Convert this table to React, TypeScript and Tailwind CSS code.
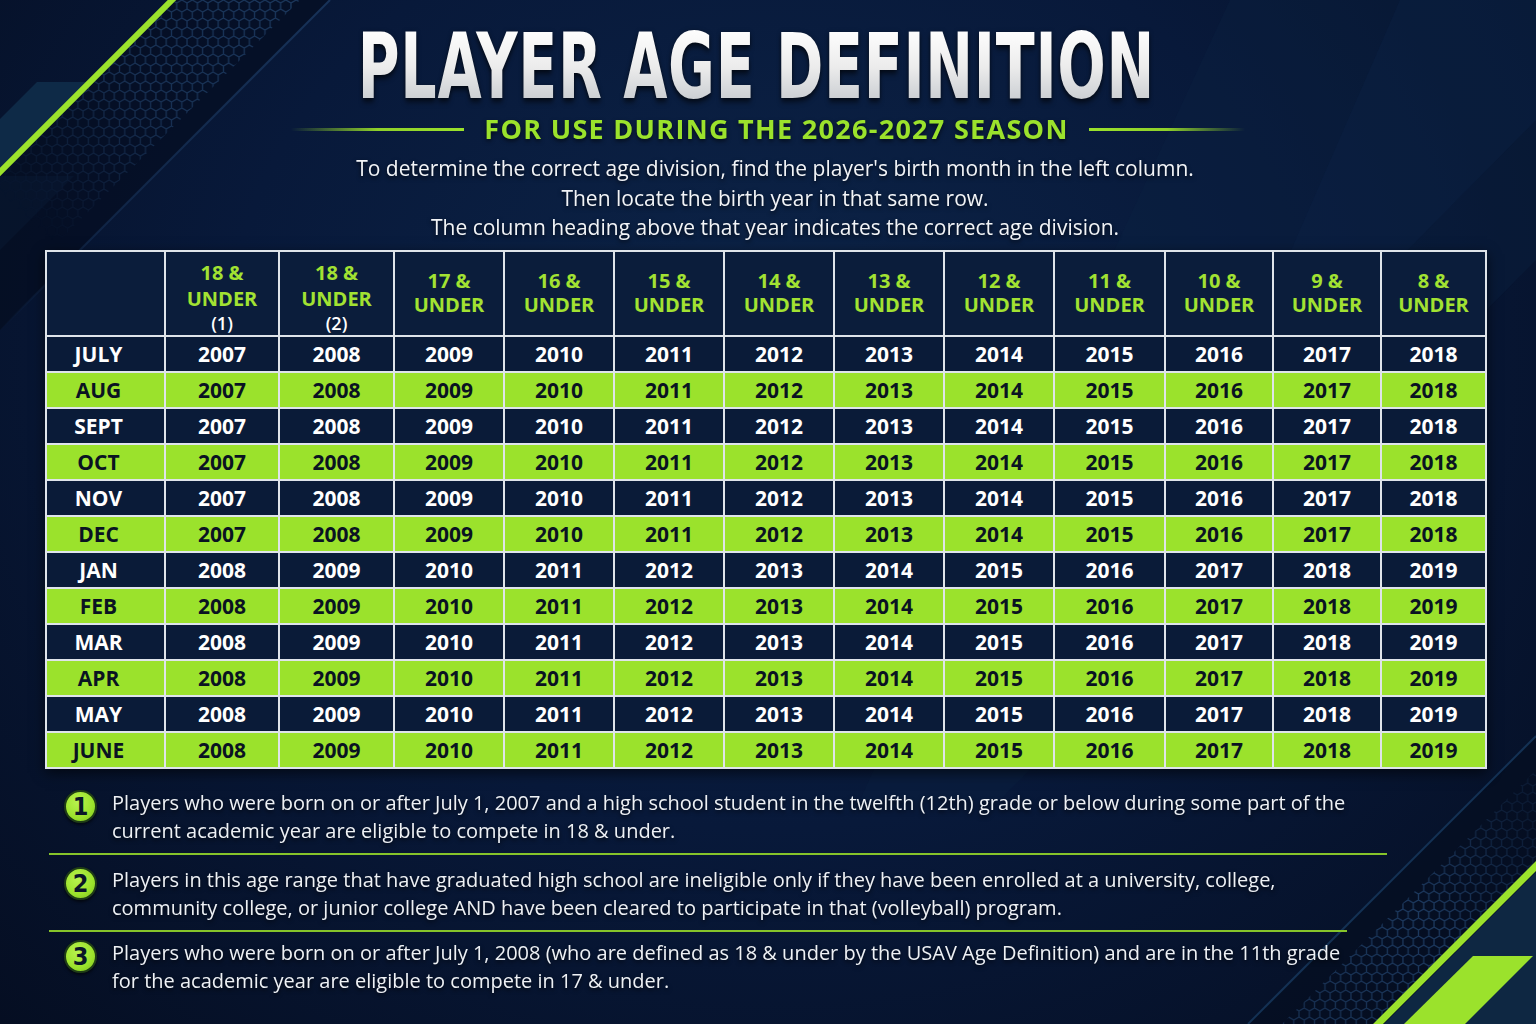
import React from "react";

const headers: { top: string; sub?: string }[] = [
  { top: "18 &", sub: "(1)" },
  { top: "18 &", sub: "(2)" },
  { top: "17 &" },
  { top: "16 &" },
  { top: "15 &" },
  { top: "14 &" },
  { top: "13 &" },
  { top: "12 &" },
  { top: "11 &" },
  { top: "10 &" },
  { top: "9 &" },
  { top: "8 &" },
];

const months: [string, number][] = [
  ["JULY", 2007],
  ["AUG", 2007],
  ["SEPT", 2007],
  ["OCT", 2007],
  ["NOV", 2007],
  ["DEC", 2007],
  ["JAN", 2008],
  ["FEB", 2008],
  ["MAR", 2008],
  ["APR", 2008],
  ["MAY", 2008],
  ["JUNE", 2008],
];

function Decor() {
  return (
    <svg
      className="absolute inset-0"
      width="1536"
      height="1024"
      viewBox="0 0 1536 1024"
    >
      <defs>
        <pattern id="hex" width="10.392" height="18" patternUnits="userSpaceOnUse">
          <path
            d="M0 3 L5.196 0 L10.392 3 M0 3 L0 9 M10.392 3 L10.392 9 M0 9 L5.196 12 L10.392 9 M5.196 12 L5.196 18"
            stroke="#1d3a60"
            strokeWidth="1.3"
            fill="none"
          />
        </pattern>
        <linearGradient id="fadeTL" x1="300" y1="-50" x2="40" y2="230" gradientUnits="userSpaceOnUse">
          <stop offset="0" stopColor="#fff" stopOpacity="1" />
          <stop offset="0.55" stopColor="#fff" stopOpacity="0.8" />
          <stop offset="1" stopColor="#fff" stopOpacity="0" />
        </linearGradient>
        <mask id="maskTL">
          <polygon points="176,0 300,0 60,240 0,240 0,176" fill="url(#fadeTL)" />
        </mask>
        <linearGradient id="fadeBR" x1="1530" y1="820" x2="1270" y2="1040" gradientUnits="userSpaceOnUse">
          <stop offset="0" stopColor="#fff" stopOpacity="0.3" />
          <stop offset="0.4" stopColor="#fff" stopOpacity="1" />
          <stop offset="1" stopColor="#fff" stopOpacity="0.7" />
        </linearGradient>
        <mask id="maskBR">
          <polygon points="1536,770 1536,862 1374,1024 1282,1024" fill="url(#fadeBR)" />
        </mask>
        <linearGradient id="thinTL" x1="330" y1="0" x2="0" y2="330" gradientUnits="userSpaceOnUse">
          <stop offset="0" stopColor="#173258" stopOpacity="1" />
          <stop offset="0.8" stopColor="#173258" stopOpacity="0.5" />
          <stop offset="1" stopColor="#173258" stopOpacity="0" />
        </linearGradient>
      </defs>

      {/* top right faint streaks */}
      <polygon points="1230,0 1536,0 1536,260 1000,800 860,800" fill="#0b2142" opacity="0.35" />
      <polygon points="1400,0 1536,0 1536,120 1200,460" fill="#0d264a" opacity="0.3" />

      {/* top-left */}
      <polygon points="176,0 330,0 0,330 0,176" fill="#040b1c" opacity="0.55" />
      <rect x="0" y="0" width="340" height="260" fill="url(#hex)" mask="url(#maskTL)" />
      <polygon points="37,82 92,82 2,172 0,172 0,119" fill="#0e2a47" />
      <polygon points="0,176 0,250 74,176 " fill="#0a1c36" opacity="0.4" />
      <line x1="330" y1="0" x2="0" y2="330" stroke="url(#thinTL)" strokeWidth="2" />
      <line x1="176" y1="-4" x2="-4" y2="176" stroke="#9be22c" strokeWidth="6" />

      {/* bottom-right */}
      <polygon points="1536,736 1536,866 1378,1024 1248,1024" fill="#040b1c" opacity="0.5" />
      <rect x="1240" y="730" width="296" height="294" fill="url(#hex)" mask="url(#maskBR)" />
      <polygon points="1536,872 1536,1024 1384,1024" fill="#0e2742" />
      <line x1="1536" y1="736" x2="1248" y2="1024" stroke="#143154" strokeWidth="2" />
      <line x1="1540" y1="862" x2="1374" y2="1028" stroke="#9be22c" strokeWidth="7" />
      <polygon points="1473,956 1533,956 1465,1024 1404,1024" fill="#9be22c" />
    </svg>
  );
}

function Circle({ n }: { n: number }) {
  return (
    <div className="mt-[1px] flex h-[33px] w-[33px] shrink-0 items-center justify-center rounded-full border-2 border-[#1f3d16] bg-[radial-gradient(circle_at_40%_35%,#b8f24e_0%,#9be22c_60%,#7cc01d_100%)] shadow-[0_2px_3px_rgba(0,0,0,0.6)]">
      <span className="font-['DejaVu_Sans_Condensed',sans-serif] text-[25px] font-bold leading-none text-[#0a1628]">
        {n}
      </span>
    </div>
  );
}

export default function App() {
  return (
    <div className="relative h-[1024px] w-[1536px] overflow-hidden bg-[radial-gradient(ellipse_at_50%_35%,#0c2448_0%,#08193a_50%,#050e22_100%)]">
      <Decor />
      <div className="relative flex flex-col items-center">
        {/* Title */}
        <h1 className="mt-[27px] mr-[24px] h-[80px] scale-x-[0.705] whitespace-nowrap bg-gradient-to-b from-white via-[#ececec] to-[#c4c8cd] bg-clip-text font-['DejaVu_Sans_Condensed',sans-serif] text-[90px] font-bold leading-[80px] tracking-[1px] text-transparent drop-shadow-[0_3px_3px_rgba(0,0,0,0.75)]">
          PLAYER AGE DEFINITION
        </h1>

        {/* Subtitle */}
        <div className="mt-[7px] flex h-[30px] items-center">
          <div className="h-[3px] w-[173px] bg-gradient-to-r from-transparent via-[#8fd02a] to-[#9be22c]" />
          <div className="mx-[20px] whitespace-nowrap font-['Open_Sans',sans-serif] text-[27px] font-bold leading-[30px] tracking-[1.3px] text-[#9be22c] drop-shadow-[0_2px_2px_rgba(0,0,0,0.6)]">
            FOR USE DURING THE 2026-2027 SEASON
          </div>
          <div className="h-[3px] w-[156px] bg-gradient-to-l from-transparent via-[#8fd02a] to-[#9be22c]" />
        </div>

        {/* Instructions */}
        <div className="mt-[10px] ml-[14px] text-center font-['Open_Sans',sans-serif] text-[21px] leading-[29.5px] text-[#f2f4f7] drop-shadow-[0_2px_2px_rgba(0,0,0,0.7)]">
          <div>To determine the correct age division, find the player's birth month in the left column.</div>
          <div>Then locate the birth year in that same row.</div>
          <div>The column heading above that year indicates the correct age division.</div>
        </div>

        {/* Table */}
        <div className="mt-[7px] self-start ml-[45px] grid grid-cols-[117px_112px_113px_108px_108px_108px_108px_108px_108px_109px_106px_106px_103px] gap-[2px] bg-[#dfe4ea] p-[2px] font-['Open_Sans',sans-serif] shadow-[0_4px_12px_rgba(0,0,0,0.6)]">
          <div className="h-[83px] bg-[#0b1d3b]" />
          {headers.map((h, i) =>
            h.sub ? (
              <div
                key={i}
                className="flex h-[83px] flex-col items-center justify-center bg-[#0b1d3b] pt-[8px]"
              >
                <div className="text-[20px] font-bold leading-[26px] text-[#a2e232]">{h.top}</div>
                <div className="text-[20px] font-bold leading-[26px] text-[#a2e232]">UNDER</div>
                <div className="text-[18px] font-semibold leading-[22px] text-white">{h.sub}</div>
              </div>
            ) : (
              <div
                key={i}
                className="flex h-[83px] flex-col items-center justify-center bg-[#0b1d3b]"
              >
                <div className="text-[20px] font-bold leading-[24px] text-[#a2e232]">{h.top}</div>
                <div className="text-[20px] font-bold leading-[24px] text-[#a2e232]">UNDER</div>
              </div>
            )
          )}
          {months.map(([m, base], r) => {
            const green = r % 2 === 1;
            const cell = green
              ? "bg-[#9be22c] text-[#0a1322]"
              : "bg-[#0a1b38] text-white";
            return (
              <React.Fragment key={m}>
                <div
                  className={`flex h-[34px] items-center justify-center pr-[14px] pt-[2px] text-[21px] font-bold leading-none ${cell}`}
                >
                  {m}
                </div>
                {headers.map((_, i) => (
                  <div
                    key={i}
                    className={`flex h-[34px] items-center justify-center pt-[2px] text-[21px] font-bold leading-none ${cell}`}
                  >
                    {base + i}
                  </div>
                ))}
              </React.Fragment>
            );
          })}
        </div>

        {/* Footnotes */}
        <div className="mt-[20px] self-start ml-[64px] font-['Open_Sans',sans-serif] text-[20px] leading-[28.5px] text-[#eef1f5]">
          <div className="flex gap-[15px]">
            <Circle n={1} />
            <div className="whitespace-nowrap drop-shadow-[0_2px_2px_rgba(0,0,0,0.7)]">
              <div>
                Players who were born on or after July 1, 2007 and a high school student in the twelfth (12th) grade or below during some part of the
              </div>
              <div>current academic year are eligible to compete in 18 &amp; under.</div>
            </div>
          </div>
          <div className="-ml-[15px] mt-[7px] h-[2px] w-[1338px] bg-[#86c42a]" />
          <div className="mt-[11px] flex gap-[15px]">
            <Circle n={2} />
            <div className="whitespace-nowrap drop-shadow-[0_2px_2px_rgba(0,0,0,0.7)]">
              <div>
                Players in this age range that have graduated high school are ineligible only if they have been enrolled at a university, college,
              </div>
              <div>
                community college, or junior college AND have been cleared to participate in that (volleyball) program.
              </div>
            </div>
          </div>
          <div className="-ml-[15px] mt-[7px] h-[2px] w-[1298px] bg-[#86c42a]" />
          <div className="mt-[7px] flex gap-[15px]">
            <Circle n={3} />
            <div className="whitespace-nowrap drop-shadow-[0_2px_2px_rgba(0,0,0,0.7)]">
              <div>
                Players who were born on or after July 1, 2008 (who are defined as 18 &amp; under by the USAV Age Definition) and are in the 11th grade
              </div>
              <div>for the academic year are eligible to compete in 17 &amp; under.</div>
            </div>
          </div>
        </div>
      </div>
    </div>
  );
}
